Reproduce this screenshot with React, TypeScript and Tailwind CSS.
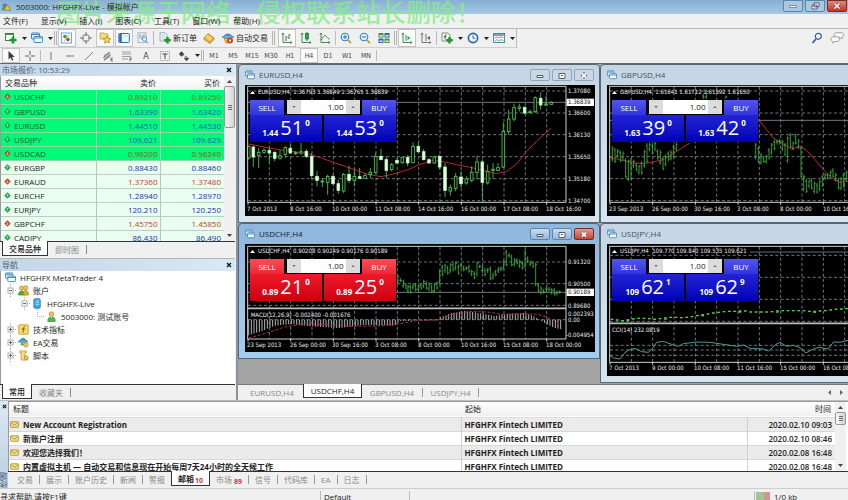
import type { ReactNode } from 'react'

type Bar = [x: number, high: number, low: number]
type Candle = [x: number, high: number, low: number, top: number, bottom: number, filled: number]

const ICONS: Record<string, ReactNode> = {
  app: (
    <>
      <path d="M1 9 5 2l4 3 2 5z" fill="#5ba544" stroke="#2f6f2b" strokeWidth=".6" />
      <path d="M4 10 7 4l3 2 1 4z" fill="#f2c14a" stroke="#94701c" strokeWidth=".6" />
      <circle cx="4" cy="4" r="2" fill="#3d86c6" />
    </>
  ),
  addChart: (
    <>
      <rect x=".5" y="1.5" width="8" height="7" fill="#fff" stroke="#3a8a3a" />
      <path d="M.5 2.5h8" stroke="#3a8a3a" />
      <path d="M8 4.5v7M4.5 8h7" stroke="#1c9a2c" strokeWidth="2.6" />
    </>
  ),
  profiles: (
    <>
      <rect x=".5" y="1" width="8" height="6" rx="1" fill="#d9ecfa" stroke="#3f83b8" />
      <path d="M1 2.5h7" stroke="#3f83b8" />
      <rect x="3" y="4.5" width="8.5" height="6" rx="1" fill="#f4faff" stroke="#3f83b8" />
      <path d="M3.500 6h8" stroke="#3f83b8" />
    </>
  ),
  market: (
    <>
      <rect x=".5" y="1" width="10" height="10" fill="#f6fbff" stroke="#7da7c8" />
      <circle cx="4" cy="4.500" r="1.800" fill="#2da043" />
      <circle cx="7" cy="7.500" r="1.800" fill="#c8402c" />
      <path d="m3 9 5-6" stroke="#5b8a5b" strokeWidth=".5" />
    </>
  ),
  target: (
    <>
      <circle cx="6" cy="6" r="3.500" fill="none" stroke="#777" />
      <path d="M6 0v4M6 8v4M0 6h4M8 6h4" stroke="#777" />
    </>
  ),
  navigator: (
    <>
      <path d="M1 1h4l1 1h3v5H1z" fill="#f6dc7a" stroke="#b8902c" strokeWidth=".7" />
      <path d="m8 4 1.200 2.500 2.600.2-2 1.800.6 2.600L8 9.700l-2.400 1.400.6-2.600-2-1.800 2.600-.2z" fill="#ffd84a" stroke="#a67a12" strokeWidth=".7" />
    </>
  ),
  terminal: (
    <>
      <rect x=".8" y="1.500" width="10.500" height="9" rx=".8" fill="#f4faff" stroke="#2d6da6" />
      <path d="M2.500 2v8" stroke="#2d6da6" strokeWidth="2.500" />
      <path d="M5 4h5" stroke="#9fc0dc" strokeWidth=".6" />
    </>
  ),
  tester: (
    <>
      <rect x="1" y=".8" width="8" height="9.500" fill="#f4f8fb" stroke="#8ba6ba" strokeWidth=".8" />
      <path d="M3 2v5M5 3v5M7 2v4" stroke="#4d87b5" strokeWidth=".8" />
      <circle cx="7.500" cy="7" r="2.200" fill="#d9ecfa" stroke="#5c86a5" strokeWidth=".8" />
      <path d="m9 9 2 2.500" stroke="#5c86a5" />
    </>
  ),
  order: (
    <>
      <path d="M1 .8h5l2 2V9H1z" fill="#fafcff" stroke="#7c95a8" strokeWidth=".8" />
      <path d="M2.500 3h3M2.500 5h4M2.500 7h3" stroke="#93a9b9" strokeWidth=".7" />
      <path d="M8.500 5v6.500M5.200 8.300h6.600" stroke="#1c9a2c" strokeWidth="2.500" />
    </>
  ),
  book: (
    <>
      <path d="m1 6 4-4.500 6 4.500-4 4.500z" fill="#f5c34e" stroke="#b27a18" strokeWidth=".8" />
      <path d="m1 6v1.500l6 4v-1M11 6v1.500l-4 4" fill="none" stroke="#b27a18" strokeWidth=".8" />
      <path d="m3.500 4 4.500 4" stroke="#fff0b8" />
    </>
  ),
  auto: (
    <>
      <path d="M2 5c1-4 7-4 8 0z" fill="#4d9fd0" stroke="#276b9b" strokeWidth=".7" />
      <path d="M0 5c3-2 9-2 12 0-3 1.500-9 1.500-12 0z" fill="#7cc1e4" stroke="#276b9b" strokeWidth=".6" />
      <path d="M2 6.500h5V11H4z" fill="#f2c14a" stroke="#a67a12" strokeWidth=".6" />
      <circle cx="8" cy="8.500" r="3" fill="#d93a2b" />
      <rect x="7" y="7.500" width="2" height="2" fill="#fff" />
    </>
  ),
  bars: <path d="M2 1v9.500h9M.8 2.500 2 1l1.200 1.500M9.500 9.300l1.500 1.200L9.500 11.700M5 4v5M5 8H4M5 5h1.500M8 2v5M8 3h1.500M8 6H6.800" fill="none" stroke="#2f7d4c" strokeWidth=".9" />,
  candles: (
    <>
      <path d="M2 1v9.500h9M.8 2.500 2 1l1.200 1.500M9.500 9.300l1.500 1.200L9.500 11.700M7 0v9" fill="none" stroke="#2f7d4c" strokeWidth=".9" />
      <rect x="5.500" y="1.500" width="3" height="5.500" fill="#1fae3c" stroke="#117027" strokeWidth=".7" />
    </>
  ),
  line: <path d="M2 1v9.500h9M.8 2.500 2 1l1.200 1.500M9.500 9.300l1.500 1.200L9.500 11.700M2.500 8c2-5 4-5 5-3.500S9.500 7 10.500 7" fill="none" stroke="#2f7d4c" strokeWidth=".9" />,
  zoomIn: (
    <>
      <path d="m8 8 3 3.200" stroke="#c89a2a" strokeWidth="1.800" />
      <circle cx="5" cy="5" r="3.800" fill="#d8efff" stroke="#2f7fc1" strokeWidth="1.100" />
      <path d="M5 3v4M3 5h4" stroke="#2f6fb1" />
    </>
  ),
  zoomOut: (
    <>
      <path d="m8 8 3 3.200" stroke="#c89a2a" strokeWidth="1.800" />
      <circle cx="5" cy="5" r="3.800" fill="#d8efff" stroke="#2f7fc1" strokeWidth="1.100" />
      <path d="M3 5h4" stroke="#2f6fb1" />
    </>
  ),
  tile: (
    <>
      <path d="M.5 1h5v4.500h-5zM6.500 6.500h5V11h-5z" fill="#3d9b3e" />
      <path d="M6.500 1h5v4.500h-5zM.5 6.500h5V11h-5z" fill="#2d6ca8" />
      <path d="M1.500 3h3v1.500h-3zM7.500 3h3v1.500h-3zM1.500 8.500h3V10h-3zM7.500 8.500h3V10h-3z" fill="#e7f3ea" />
    </>
  ),
  scroll: (
    <>
      <path d="M2 1v9.500h9M.8 2.500 2 1l1.200 1.500M9.500 9.300l1.500 1.200L9.500 11.700M5 3v6" fill="none" stroke="#2f7d4c" strokeWidth=".9" />
      <path d="M6.500 4v4L9.500 6z" fill="#1fae3c" />
    </>
  ),
  shift: (
    <>
      <path d="M2 1v9.500h9M.8 2.500 2 1l1.200 1.500M9.500 9.300l1.500 1.200L9.500 11.700M6 2v7" fill="none" stroke="#5c6a62" strokeWidth=".9" />
      <path d="M10 4v4L7 6z" fill="#7b5b4b" />
    </>
  ),
  indicators: (
    <>
      <path d="M1 1h6l2 2v6H1z" fill="#f7faf7" stroke="#5c7a62" strokeWidth=".8" />
      <path d="M5.500 2.500C4 2.500 4 4 4 7.500M2.800 4.700h2.700" fill="none" stroke="#333" strokeWidth=".8" />
      <path d="M8.500 5v6.500M5.200 8.300h6.600" stroke="#1c9a2c" strokeWidth="2.500" />
    </>
  ),
  clock: (
    <>
      <circle cx="6" cy="6" r="4.600" fill="#eef7ff" stroke="#2468ae" strokeWidth="1.700" />
      <path d="M6 3.200V6.300h2.300" fill="none" stroke="#555" strokeWidth=".9" />
    </>
  ),
  templates: (
    <>
      <rect x=".6" y="1.500" width="11" height="9" fill="#f4faff" stroke="#3f76a5" strokeWidth=".9" />
      <path d="M.6 3h11" stroke="#3f76a5" strokeWidth="1.300" />
      <path d="m2 6 2-1 2 1 2-1.500L10.500 6" fill="none" stroke="#b05b3b" strokeWidth=".7" />
      <path d="m2 9 2-1.500L6 9l2-1.500L10.500 9" fill="none" stroke="#3b9b4b" strokeWidth=".7" />
    </>
  ),
  cursor: <path d="M3.500 1v8.500l2-2 1.500 3.300 1.400-.7L7 7h2.800z" fill="#3d3d3d" />,
  cross: <path d="M6 1v4M6 7v4M1 6h4M7 6h4" stroke="#555" strokeWidth=".9" />,
  vline: <path d="M6 2v8" stroke="#777" />,
  hline: <path d="M2 6h8" stroke="#777" />,
  trend: <path d="m2 10 8-8" stroke="#666" strokeWidth=".8" />,
  channel: (
    <>
      <path d="m1 8 7-6M2 10.500l7-6M3 4v6M5 3v6M7 2v6" stroke="#555" strokeWidth=".7" />
      <path d="M11 8H9v3h2M9 9.500h1.500" fill="none" stroke="#555" strokeWidth=".7" />
    </>
  ),
  fibo: (
    <>
      <path d="M1 2h9M1 4h9M1 6.500h9M1 9h6" stroke="#888" strokeWidth=".8" />
      <path d="M11 8H9v3.500M9 9.500h1.500" fill="none" stroke="#555" strokeWidth=".7" />
    </>
  ),
  label: (
    <>
      <rect x="1.500" y="1.500" width="9" height="9" fill="none" stroke="#777" strokeWidth=".8" strokeDasharray="1.200 1" />
      <path d="M3.500 4h5M6 4v5" stroke="#444" />
    </>
  ),
  arrows: <path d="m3.500 1.500 2.500 2.500-2.500 2.500L1 4zM8.500 6v2H11L8.500 11 6 8h1.500M5 5l3 2" fill="#444" stroke="#444" strokeWidth=".4" />,
  search: (
    <>
      <path d="M5 7 1.500 11" stroke="#2f5f9c" strokeWidth="1.800" />
      <circle cx="7.300" cy="4.300" r="3" fill="#eef6ff" stroke="#2f5f9c" strokeWidth="1.200" />
    </>
  ),
  chat: (
    <>
      <path d="M5 1.500h5c2 0 2 4 0 4v1.500L8.500 5.500H5c-2 0-2-4 0-4z" fill="#f7f7f7" stroke="#999" strokeWidth=".8" />
      <path d="M2.500 5h4c2 0 2 4 0 4H4L2.500 10.500V9c-2 0-2-4 0-4z" fill="#f7f7f7" stroke="#999" strokeWidth=".8" />
    </>
  ),
  accounts: (
    <>
      <circle cx="4" cy="3.500" r="2.300" fill="#f4c64c" stroke="#9c7418" strokeWidth=".6" />
      <path d="M.5 11c0-6 7-6 7 0z" fill="#3fae49" stroke="#1f7a2a" strokeWidth=".6" />
      <circle cx="8.500" cy="3" r="2.300" fill="#f4c64c" stroke="#9c7418" strokeWidth=".6" />
      <path d="M5.500 11c0-7 6-7 6 0z" fill="#e0a928" stroke="#9c7418" strokeWidth=".6" />
    </>
  ),
  server: (
    <>
      <rect x="2" y=".8" width="7" height="10.500" rx="1.500" fill="#3fa3e0" stroke="#1b6fab" strokeWidth=".8" />
      <path d="M4 3h4M4 5h4M4 7h4" stroke="#d4eeff" strokeWidth=".8" />
    </>
  ),
  user: (
    <>
      <circle cx="6" cy="3.300" r="2.500" fill="#f4c64c" stroke="#9c7418" strokeWidth=".6" />
      <path d="M2 11.500c-1-7 9-7 8 0z" fill="#4fb83f" stroke="#1f7a2a" strokeWidth=".6" />
      <path d="m5 6 1 2 1-2" fill="#fff" />
    </>
  ),
  func: (
    <>
      <rect x=".8" y=".8" width="10.400" height="10.400" rx="1" fill="#f8d96a" stroke="#b8902c" strokeWidth=".8" />
      <path d="M8 2.500C6 2 6 5 5.500 9.500M4 5.500h4" fill="none" stroke="#6b4b10" strokeWidth=".9" />
    </>
  ),
  expert: (
    <>
      <path d="M2.500 4c1-3.500 5-3.500 6 0z" fill="#4d9fd0" stroke="#276b9b" strokeWidth=".7" />
      <path d="M0 5c3-2.500 8-2.500 11 0-3 1.500-8 1.500-11 0z" fill="#55b1de" stroke="#276b9b" strokeWidth=".6" />
      <circle cx="4.500" cy="8" r="1.500" fill="#5ba544" />
      <circle cx="8.500" cy="8.500" r="2.500" fill="#f4c64c" stroke="#9c7418" strokeWidth=".6" />
    </>
  ),
  script: (
    <>
      <path d="M2 1h7v2H7.500v6H10v2H3.500V3H2z" fill="#f8dd86" stroke="#b8902c" strokeWidth=".8" />
      <circle cx="9" cy="8.500" r="2.200" fill="#f4c64c" stroke="#9c7418" strokeWidth=".6" />
    </>
  ),
  mail: (
    <>
      <rect x=".8" y="2.300" width="10.400" height="7.500" rx=".8" fill="#f3dc7c" stroke="#9c7a22" strokeWidth=".9" />
      <path d="m1.500 3.500 4.500 3.500 4.500-3.500" fill="none" stroke="#9c7a22" strokeWidth=".9" />
    </>
  ),
}

function Icon({ name, className = 'size-3' }: { name: string; className?: string }) {
  return (
    <svg viewBox="0 0 12 12" className={`shrink-0 ${className}`} aria-hidden="true">
      {ICONS[name]}
    </svg>
  )
}

function Tool({ name, pressed = false, children }: { name?: string; pressed?: boolean; children?: ReactNode }) {
  return (
    <button
      aria-label={name}
      className={`flex w-[18px] shrink-0 items-center justify-center self-stretch text-[7px] text-[#444] ${
        pressed ? 'border border-[#c4c4c4] bg-[#fafafa]' : ''
      }`}
    >
      {name ? <Icon name={name} /> : children}
    </button>
  )
}

function DropArrow({ name }: { name: string }) {
  return (
    <button aria-label={`${name} list`} className="flex w-[6px] shrink-0 items-center justify-center">
      <svg viewBox="0 0 5 3" className="h-[3px] w-[5px]"><path d="M0 0h5L2.500 3z" fill="#222" /></svg>
    </button>
  )
}

function Divider({ wide = false }: { wide?: boolean }) {
  return wide
    ? <div className="mx-[2px] my-[2px] w-[3px] self-stretch border-x border-[#b4b4b4]" />
    : <div className="my-[2px] w-px self-stretch bg-[#bdbdbd]" />
}

const MENU = ['文件(F)', '显示(V)', '插入(I)', '图表(C)', '工具(T)', '窗口(W)', '帮助(H)']
const PERIODS = ['M1', 'M5', 'M15', 'M30', 'H1', 'H4', 'D1', 'W1', 'MN']

function Toolbars() {
  return (
    <>
      <div className="flex h-[19px] items-center gap-px border-t border-[#b9b9b9] pl-[2px]">
        <Tool name="addChart" /><DropArrow name="addChart" />
        <Tool name="profiles" /><DropArrow name="profiles" />
        <div className="my-[2px] w-[3px] self-stretch border-x border-[#b4b4b4]" />
        <Tool name="market" pressed />
        <Tool name="target" />
        <Tool name="navigator" pressed />
        <Tool name="terminal" pressed />
        <Tool name="tester" />
        <div className="my-[2px] w-[3px] self-stretch border-l border-[#b4b4b4]" />
        <button className="flex w-[42px] shrink-0 items-center gap-[2px] pl-[2px] whitespace-nowrap">
          <Icon name="order" />新订单
        </button>
        <Tool name="book" />
        <button className="flex w-[50px] shrink-0 items-center gap-[2px] pl-[3px] whitespace-nowrap">
          <Icon name="auto" />自动交易
        </button>
        <Divider wide />
        <Tool name="bars" pressed />
        <Tool name="candles" />
        <Tool name="line" />
        <Divider />
        <Tool name="zoomIn" />
        <Tool name="zoomOut" />
        <Tool name="tile" />
        <div className="my-[2px] w-[3px] self-stretch border-x border-[#b4b4b4]" />
        <Tool name="scroll" pressed />
        <Tool name="shift" />
        <Divider />
        <Tool name="indicators" /><DropArrow name="indicators" />
        <Tool name="clock" /><DropArrow name="clock" />
        <Tool name="templates" /><DropArrow name="templates" />
        <div className="w-px self-stretch bg-[#bdbdbd]" />
        <div className="ml-auto flex gap-[7px] pr-[4px]">
          <button aria-label="search"><Icon name="search" /></button>
          <button aria-label="chat"><Icon name="chat" className="size-[14px]" /></button>
        </div>
      </div>
      <div className="flex h-[16px]">
        <div className="flex w-[518px] items-center gap-px border-t border-[#cfcfcf] pl-[2px] font-['DejaVu_Sans_Condensed','DejaVu_Sans',sans-serif]">
          <Tool name="cursor" pressed />
          <Tool name="cross" />
          <Divider />
          <Tool name="vline" />
          <Tool name="hline" />
          <Tool name="trend" />
          <Tool name="channel" />
          <Tool name="fibo" />
          <Tool><span className="text-[9px]">A</span></Tool>
          <Tool name="label" />
          <Tool name="arrows" />
          <DropArrow name="arrows" />
          <div className="my-[2px] w-[3px] self-stretch border-x border-[#b4b4b4]" />
          {PERIODS.map((p) => <Tool key={p} pressed={p === 'H4'}>{p}</Tool>)}
          <Divider />
        </div>
      </div>
    </>
  )
}

const QUOTES: [symbol: string, bid: string, ask: string, up: boolean][] = [
  ['USDCHF', '0.89210', '0.89250', false],
  ['GBPUSD', '1.63390', '1.63420', true],
  ['EURUSD', '1.44510', '1.44530', true],
  ['USDJPY', '109.621', '109.629', true],
  ['USDCAD', '0.96200', '0.96240', false],
  ['EURGBP', '0.88430', '0.88460', true],
  ['EURAUD', '1.37360', '1.37480', false],
  ['EURCHF', '1.28940', '1.28970', true],
  ['EURJPY', '120.210', '120.250', true],
  ['GBPCHF', '1.45750', '1.45850', false],
  ['CADJPY', '86.430', '86.490', true],
]

function PanelTitle({ children }: { children: ReactNode }) {
  return (
    <div className="flex h-[12px] shrink-0 items-center justify-between bg-linear-to-r from-[#c3d6e8] to-[#d9e8f5] pr-[3px] pl-[2px] leading-[12px] text-[#4b6073]">
      {children}
      <button aria-label="close panel" className="size-[6px]">
        <svg viewBox="0 0 6 6"><path d="m1 1 4 4M5 1 1 5" stroke="#111" strokeWidth="1.300" /></svg>
      </button>
    </div>
  )
}

function ScrollBar({ thumb }: { thumb: string }) {
  return (
    <div className="flex w-[11px] shrink-0 flex-col items-center justify-between bg-[#f0f0f0] py-[4px]">
      <svg viewBox="0 0 5 3" className="h-[3px] w-[5px]"><path d="M0 3h5L2.500 0z" fill="#444" /></svg>
      <div className="mt-[3px] flex w-full flex-1">
        <div className={`flex w-full flex-col items-center justify-center gap-px rounded-[2px] border border-[#979797] bg-linear-to-r from-[#f7f7f7] to-[#d4d4d4] ${thumb}`}>
          <div className="h-px w-[4px] bg-[#666]" />
          <div className="h-px w-[4px] bg-[#666]" />
          <div className="h-px w-[4px] bg-[#666]" />
        </div>
      </div>
      <svg viewBox="0 0 5 3" className="h-[3px] w-[5px]"><path d="M0 0h5L2.500 3z" fill="#444" /></svg>
    </div>
  )
}

function BottomTabs({ active, other }: { active: string; other: string }) {
  return (
    <div className="flex h-[16px] shrink-0 border-t border-[#333] pl-[2px]">
      <button className="-mt-px h-[15px] border border-t-0 border-[#333] bg-white px-[6px] leading-[13px] font-medium">{active}</button>
      <button className="my-[3px] border-r border-[#888] px-[7px] leading-[8px] text-[#888]">{other}</button>
    </div>
  )
}

function MarketWatch() {
  return (
    <section className="flex h-[195px] shrink-0 flex-col border-b border-[#b5b5b5]">
      <PanelTitle>市场报价: 10:53:29</PanelTitle>
      <div className="flex h-[165px] shrink-0 overflow-hidden border-l border-[#999] bg-white">
        <div className="min-w-0 flex-1 overflow-hidden">
          <table className="w-full table-fixed border-collapse">
            <thead>
              <tr className="h-[14px] bg-linear-to-b from-white to-[#f2f2f2]">
                <th className="w-[95px] pl-[4px] text-left font-normal">交易品种</th>
                <th className="pr-[4px] text-right font-normal">卖价</th>
                <th className="pr-[4px] text-right font-normal">买价</th>
              </tr>
            </thead>
            <tbody>
              {QUOTES.map(([symbol, bid, ask, up], i) => {
                const strong = i < 5
                const tone = strong ? (up ? 'text-[#0065b5]' : 'text-[#8a6410]') : up ? 'text-[#1a2fa8]' : 'text-[#c03a2b]'
                return (
                  <tr key={symbol} className={`h-[14px] border-b leading-[13px] ${strong ? 'border-[#8fd8a8] bg-[#00fa78]' : 'border-[#bccfc2] bg-[#eafff0]'}`}>
                    <td className={`border-r border-[#a9d0b5] pl-[3px] ${strong ? 'text-[#055c33]' : 'text-[#222]'}`}>
                      <span className="flex items-center gap-[3px]">
                        <svg viewBox="0 0 7 7" className="size-[7px]">
                          <path d="M3.500.3 6.700 3.500 3.500 6.700.3 3.500z" fill={up ? '#16a34a' : '#c8402c'} />
                          <path d={up ? 'M3.500 2v3M2.300 3.500 3.500 2l1.200 1.500' : 'M3.500 2v3M2.300 3.500 3.500 5l1.200-1.500'} stroke="#e8f5d0" strokeWidth=".5" fill="none" />
                        </svg>
                        {symbol}
                      </span>
                    </td>
                    <td className={`border-r border-[#a9d0b5] pr-[2px] text-right ${tone}`}>{bid}</td>
                    <td className={`pr-[3px] text-right ${tone}`}>{ask}</td>
                  </tr>
                )
              })}
            </tbody>
          </table>
        </div>
        <ScrollBar thumb="h-[42px]" />
      </div>
      <BottomTabs active="交易品种" other="即时图" />
    </section>
  )
}

const TREE: [label: string, icon: string, indent: string, sign: string][] = [
  ['HFGHFX MetaTrader 4', 'profiles', 'pl-[4px]', ''],
  ['账户', 'accounts', 'pl-[6px]', '-'],
  ['HFGHFX-Live', 'server', 'pl-[20px]', '-'],
  ['5003000: 测试账号', 'user', 'pl-[34px]', 'leaf'],
  ['技术指标', 'func', 'pl-[6px]', '+'],
  ['EA交易', 'expert', 'pl-[6px]', '+'],
  ['脚本', 'script', 'pl-[6px]', '+'],
]

function Branch({ sign }: { sign: string }) {
  if (sign === 'leaf') {
    return <svg viewBox="0 0 10 13" className="h-[13px] w-[10px]"><path d="M2.500 0v6.500H10" fill="none" stroke="#aaa" strokeDasharray="1 1" /></svg>
  }
  return (
    <svg viewBox="0 0 10 13" className="h-[13px] w-[10px]">
      <path d="M3.500 0v13M6 6.500h4" stroke="#aaa" strokeDasharray="1 1" />
      <rect x="1" y="4" width="5" height="5" fill="#fff" stroke="#999" strokeWidth=".8" />
      <path d={sign === '+' ? 'M2 6.500h3M3.500 5v3' : 'M2 6.500h3'} stroke="#444" strokeWidth=".8" />
    </svg>
  )
}

function Navigator() {
  return (
    <section className="flex min-h-0 flex-1 flex-col">
      <PanelTitle>导航</PanelTitle>
      <ul className="min-h-0 flex-1 overflow-hidden border-l border-[#999] bg-white">
        {TREE.map(([label, icon, indent, sign]) => (
          <li key={label} className={`flex h-[13px] items-center ${indent}`}>
            {sign && <Branch sign={sign} />}
            <Icon name={icon} className={sign ? 'ml-px size-[11px]' : 'size-[11px]'} />
            <span className="ml-[4px] leading-[13px]">{label}</span>
          </li>
        ))}
      </ul>
      <BottomTabs active="常用" other="收藏夹" />
    </section>
  )
}

type Label = [x: number, y: number, text: string]

// plot geometry is in thirds of a pixel, text is in pixels
function Chart({ height, top, header, rows, bottom, dates, dateY, prices = [], price, children }: {
  height: number
  top: number
  header: string
  rows: number[]
  bottom: number
  dates: string[]
  dateY: number
  prices?: Label[]
  price?: [y: number, text: string]
  children: ReactNode
}) {
  const cols = Array.from({ length: 14 }, (_, i) => 94 + i * 64)
  return (
    <svg viewBox={`0 0 350 ${height}`} style={{ height }} className="block w-[350px] bg-black font-['DejaVu_Sans_Condensed','DejaVu_Sans',sans-serif] text-[6px]">
      <g transform={`scale(${1 / 3}) translate(-21 ${-top})`}>
        <g stroke="#a4b0bb" strokeWidth="2" strokeDasharray="9 7">
          {cols.map((x) => <path key={x} d={`M${x} 72V${bottom}`} />)}
          {rows.map((y) => <path key={y} d={`M30 ${y}H984`} />)}
        </g>
        {price && <path d={`M30 ${price[0]}H984`} stroke="#8a8f98" strokeWidth="2.500" />}
        {children}
        <path d={`M29 70H984V${bottom}H29z`} fill="none" stroke="#d0d0d0" strokeWidth="3" />
        {dates.map((d, i) => <path key={d} d={`M${30 + i * 128} ${bottom}v7`} stroke="#ddd" strokeWidth="3" />)}
        {price && <rect x="986" y={price[0] - 11} width="82" height="22" fill="#fff" />}
      </g>
      <path d="M5 9h5L7.500 6z" fill="#fff" />
      <text x="13" y="9" fill="#eee" xmlSpace="preserve">{header}</text>
      {dates.map((d, i) => <text key={d} x={Math.round(2 + i * 42.7)} y={dateY} fill="#eee">{d}</text>)}
      {prices.map(([x, y, t]) => <text key={t} x={x} y={y} fill="#eee">{t}</text>)}
      {price && <text x="323" y={Math.round((price[0] - top) / 3) + 2} fill="#111">{price[1]}</text>}
    </svg>
  )
}

function Bars({ data }: { data: Bar[] }) {
  return (
    <path
      d={data.map(([x, h, l], i) => `M${x} ${h}V${l}M${x - 4} ${i % 2 ? h + 7 : l - 7}h4M${x} ${i % 2 ? l - 5 : h + 6}h4`).join('')}
      stroke="#3fb83f"
      strokeWidth="2.500"
      fill="none"
    />
  )
}

const EURUSD: Candle[] = [
  [32, 248, 290, 250, 285, 0], [46, 248, 312, 252, 282, 1], [62, 255, 315, 268, 277, 0], [78, 256, 272, 262, 268, 0],
  [94, 255, 298, 262, 270, 1], [110, 265, 295, 268, 286, 1], [126, 262, 290, 278, 285, 0], [142, 250, 285, 254, 274, 0],
  [157, 242, 272, 256, 270, 1], [173, 264, 276, 269, 272, 0], [189, 240, 275, 266, 270, 0], [205, 258, 285, 265, 280, 1],
  [221, 270, 348, 280, 338, 1], [237, 325, 370, 340, 352, 1], [253, 345, 372, 354, 357, 0], [269, 335, 395, 340, 358, 0],
  [285, 335, 365, 340, 362, 1], [301, 350, 392, 362, 382, 1], [317, 330, 390, 334, 384, 0], [333, 308, 360, 334, 352, 1],
  [349, 320, 370, 340, 352, 0], [365, 315, 346, 341, 346, 1], [381, 330, 348, 338, 346, 0], [397, 315, 345, 328, 335, 0],
  [413, 270, 332, 280, 328, 0], [429, 258, 292, 280, 290, 1], [445, 280, 345, 290, 322, 1], [461, 300, 325, 305, 320, 0],
  [477, 285, 302, 292, 300, 1], [493, 282, 302, 283, 299, 0], [509, 276, 310, 283, 300, 1], [525, 238, 302, 250, 298, 0],
  [541, 238, 270, 250, 266, 1], [557, 258, 292, 266, 290, 1], [573, 285, 302, 290, 300, 1], [589, 278, 302, 282, 300, 0],
  [605, 275, 320, 280, 312, 1], [621, 300, 402, 312, 382, 1], [637, 365, 398, 374, 384, 0], [653, 330, 385, 340, 376, 0],
  [669, 325, 375, 342, 362, 1], [685, 340, 365, 348, 360, 0], [701, 310, 358, 328, 352, 0], [717, 278, 350, 297, 328, 0],
  [733, 290, 410, 297, 358, 1], [749, 305, 365, 325, 360, 0], [765, 300, 348, 319, 322, 0], [780, 300, 325, 314, 322, 0],
  [796, 178, 315, 205, 312, 0], [812, 140, 215, 168, 206, 0], [828, 122, 175, 134, 168, 0], [844, 122, 145, 132, 136, 0],
  [860, 130, 155, 133, 150, 1], [876, 140, 152, 146, 149, 0], [892, 100, 150, 104, 146, 0], [908, 88, 140, 106, 126, 1],
  [924, 98, 130, 123, 126, 0], [940, 115, 126, 118, 124, 0],
]

const GBPUSD: Bar[] = [
  [37, 250, 295], [45, 255, 300], [53, 258, 285], [61, 262, 298], [69, 265, 292], [77, 285, 345], [85, 290, 355],
  [93, 285, 350], [101, 290, 315], [109, 300, 325], [117, 305, 335], [125, 295, 335], [133, 260, 315], [141, 240, 300],
  [149, 238, 265], [157, 242, 275], [165, 235, 265], [173, 258, 290], [181, 262, 305], [189, 280, 322], [197, 275, 310],
  [205, 265, 295], [213, 262, 292], [221, 245, 285], [229, 238, 265], [310, 92, 108], [319, 80, 108], [378, 98, 106],
  [467, 240, 290], [475, 250, 300], [483, 270, 305], [491, 278, 300], [499, 275, 302], [507, 255, 290], [515, 240, 275],
  [523, 230, 262], [531, 230, 245], [539, 228, 245], [547, 230, 265], [555, 240, 280], [563, 220, 300], [571, 210, 255],
  [579, 235, 262], [587, 212, 245], [595, 228, 258], [603, 250, 345], [611, 335, 385], [619, 348, 390], [627, 350, 375],
  [635, 345, 380], [643, 355, 392], [651, 360, 392], [659, 350, 385], [667, 335, 372], [675, 330, 350], [683, 330, 350],
  [691, 322, 345], [699, 315, 345], [707, 330, 355], [715, 345, 380], [723, 342, 382], [731, 330, 375], [739, 322, 355],
]

const USDCHF: Bar[] = [
  [480, 155, 185], [488, 165, 178], [496, 170, 195], [504, 180, 200], [510, 185, 210], [517, 185, 212], [525, 182, 200],
  [533, 180, 205], [541, 185, 205], [549, 180, 200], [557, 170, 195], [565, 175, 200], [573, 178, 205], [581, 185, 210],
  [589, 180, 210], [597, 175, 200], [605, 140, 185], [613, 125, 160], [621, 122, 150], [629, 128, 155], [637, 120, 150],
  [645, 118, 145], [653, 115, 142], [661, 125, 155], [669, 120, 135], [677, 128, 145], [685, 130, 142], [693, 125, 150],
  [701, 140, 160], [709, 145, 168], [717, 115, 160], [725, 125, 135], [733, 128, 150], [741, 135, 160], [749, 135, 150],
  [757, 130, 172], [765, 150, 170], [773, 140, 160], [781, 132, 150], [789, 130, 145], [797, 110, 140], [805, 80, 130],
  [813, 90, 105], [821, 95, 130], [829, 105, 130], [837, 105, 125], [845, 110, 135], [853, 115, 140], [861, 80, 135],
  [869, 100, 120], [877, 112, 130], [885, 115, 135], [893, 118, 190], [901, 180, 208], [909, 190, 215], [917, 198, 212],
  [925, 190, 205], [933, 192, 205], [941, 195, 215], [949, 195, 218], [957, 202, 218], [965, 202, 212],
]

// [x, y] knots of the MACD histogram, the bars between them are interpolated
const MACD = [[32, 337], [70, 325], [110, 308], [160, 303], [220, 310], [300, 315], [380, 306], [470, 308], [484, 294], [600, 292], [606, 284], [640, 270], [680, 264], [730, 271], [770, 279], [810, 272], [860, 270], [890, 281], [905, 290], [925, 303], [950, 315], [968, 318]]

function macdY(x: number) {
  const i = Math.max(1, MACD.findIndex(([kx]) => kx >= x))
  const [x0, y0] = MACD[i - 1]
  const [x1, y1] = MACD[i]
  return y0 + ((y1 - y0) * (x - x0)) / (x1 - x0)
}

const JPY_Y = [289, 291, 293, 290, 288, 286, 286, 287, 289, 287, 285, 283, 283, 284, 283, 281, 278, 275, 273, 270, 268, 266, 265, 265, 264, 264, 267, 267, 267, 267, 266, 264, 263, 263, 263, 263, 263, 265, 265, 264, 263, 261, 259, 258, 257]

type Quote = { base: string; big: string; tip: string }

function TradePanel({ sell, buy, red = false }: { sell: Quote; buy: Quote; red?: boolean }) {
  const head = red ? 'bg-linear-to-b from-[#ff4a55] to-[#ee2635]' : 'bg-linear-to-b from-[#5254ee] to-[#3234dc]'
  const body = red ? 'bg-linear-to-b from-[#f01828] to-[#cc0010]' : 'bg-linear-to-b from-[#2222d8] to-[#0000b4]'
  return (
    <div className="absolute top-[15px] left-[5px] w-[146px] bg-black text-white">
      <div className="flex h-[15px] items-start justify-between">
        <button className={`h-[15px] w-[34px] leading-[15px] ${head}`}>SELL</button>
        <div className="flex h-[14px] w-[73px] bg-[#dcdcdc] text-[#888]">
          <button aria-label="less" className="flex w-[14px] items-center justify-center">
            <svg viewBox="0 0 5 3" className="h-[2px] w-[4px]"><path d="M0 0h5L2.500 3z" fill="#667" /></svg>
          </button>
          <input aria-label="volume" defaultValue="1.00" className="w-0 flex-1 bg-white pr-[2px] text-right text-[#222]" />
          <button aria-label="more" className="flex w-[14px] items-center justify-center">
            <svg viewBox="0 0 5 3" className="h-[2px] w-[4px]"><path d="M0 3h5L2.500 0z" fill="#667" /></svg>
          </button>
        </div>
        <button className={`h-[15px] w-[34px] leading-[15px] ${head}`}>BUY</button>
      </div>
      <div className="flex justify-between">
        {[sell, buy].map((q, i) => (
          <button key={i} className={`flex h-[27px] w-[72px] justify-center gap-[2px] ${body}`}>
            <span className="pt-[12px] leading-[12px] font-bold">{q.base}</span>
            <span className="text-[20px] leading-[26px]">{q.big}</span>
            <span className="pt-[2px] leading-[12px] font-bold">{q.tip}</span>
          </button>
        ))}
      </div>
    </div>
  )
}

function ChartWindow({ title, active = false, children }: { title: string; active?: boolean; children: ReactNode }) {
  return (
    <section
      className={`w-[362px] shrink-0 rounded-t-[4px] border border-[#5a6672] pr-[4px] pb-[6px] pl-[6px] ${
        active ? 'bg-linear-to-b from-[#8fb7de] to-[#a3cdf0]' : 'bg-linear-to-b from-[#c6d5e3] to-[#d6e4f0]'
      }`}
    >
      <div className="flex h-[20px] items-center gap-[4px]">
        <Icon name="profiles" className="size-[10px]" />
        <h2 className={active ? 'text-[#15202c]' : 'text-[#44505c]'}>{title}</h2>
        <div className="ml-auto flex gap-[2px] pr-px">
          {['M3 5.500h6v2H3z', 'M3 3.500h6v5H3zM5 5.500h2', 'm4 3.500 4 4M8 3.500l-4 4'].map((d, i) => (
            <button
              key={d}
              aria-label={['minimize', 'maximize', 'close'][i]}
              className={`flex h-[12px] w-[20px] items-center justify-center rounded-[2px] border ${
                active
                  ? i === 2 ? 'border-[#7c2a22] bg-linear-to-b from-[#e09a8e] to-[#c8402c]' : 'border-[#5f83a8] bg-linear-to-b from-[#c8def2] to-[#94b9dc]'
                  : 'border-[#93a5b6] bg-[#c9d8e6]'
              }`}
            >
              <svg viewBox="0 0 12 11" className="h-[11px] w-[12px]">
                {i === 2 && <path d={d} stroke="#5a5a66" strokeWidth="3.500" />}
                <path d={d} fill={i === 2 ? 'none' : '#fff'} stroke={i === 2 ? '#fff' : '#5a5a66'} strokeWidth={i === 2 ? 1.8 : 1} />
              </svg>
            </button>
          ))}
        </div>
      </div>
      <div className="relative">{children}</div>
    </section>
  )
}

function Desktop() {
  return (
    <div className="flex min-h-0 flex-1 overflow-hidden bg-[#a3a3a3]">
      <div className="flex w-[362px] shrink-0 flex-col">
        <ChartWindow title="EURUSD,H4">
          <Chart
            height={131} top={66} bottom={418} dateY={126}
            header="EURUSD,H4  1.36793 1.36849 1.36765 1.36839"
            rows={[84, 150, 215, 281, 347, 413]}
            dates={['7 Oct 2013', '8 Oct 16:00', '10 Oct 00:00', '11 Oct 08:00', '14 Oct 16:00', '16 Oct 00:00', '17 Oct 08:00', '18 Oct 16:00']}
            prices={[[323, 8, '1.37080'], [323, 30, '1.36600'], [323, 52, '1.36130'], [323, 74, '1.35650'], [323, 96, '1.35180'], [323, 118, '1.34700']]}
            price={[118, '1.36839']}
          >
            <path d="M32 243 110 258 160 265 210 272 250 285 300 303 350 320 390 334 430 341 470 332 510 320 546 304 586 292 616 296 656 305 706 315 776 332 806 325 836 303 866 265 896 235 938 196" fill="none" stroke="#b82828" strokeWidth="3" />
            {EURUSD.map(([x, h, l, t, b, filled]) => (
              <g key={x} stroke="#4fd04f" strokeWidth="2.500">
                <path d={`M${x} ${h}V${l}`} />
                <rect x={x - 4} y={t} width="8" height={b - t} fill={filled ? '#eaffea' : '#000'} stroke={filled ? '#b8f5b8' : '#4fd04f'} />
              </g>
            ))}
          </Chart>
          <TradePanel sell={{ base: '1.44', big: '51', tip: '0' }} buy={{ base: '1.44', big: '53', tip: '0' }} />
        </ChartWindow>
        <ChartWindow title="USDCHF,H4" active>
          <Chart
            height={108} top={63} bottom={348} dateY={103}
            header="USDCHF,H4  0.90208 0.90249 0.90176 0.90189"
            rows={[117, 182, 247, 290]}
            dates={['23 Sep 2013', '26 Sep 00:00', '30 Sep 16:00', '3 Oct 08:00', '8 Oct 00:00', '10 Oct 16:00', '15 Oct 08:00', '18 Oct 00:00']}
            prices={[[323, 20, '0.91320'], [323, 42, '0.90500'], [323, 64, '0.89680'], [323, 72, '0.002393'], [323, 78, '0.00'], [321, 93, '-0.004954']]}
            price={[208, '0.90189']}
          >
            <Bars data={USDCHF} />
            <path d={Array.from({ length: 118 }, (_, i) => 32 + i * 8).map((x) => `M${x} 290V${Math.round(macdY(x))}`).join('')} stroke="#b5b5b5" strokeWidth="3" />
            <path d="M32 345 80 332 140 312 200 303 260 305 340 310 420 309 500 300 546 291 600 291 640 275 700 265 760 268 800 276 850 272 900 274 930 284 968 300" fill="none" stroke="#a83232" strokeWidth="3" strokeDasharray="9 5" />
            <path d="M29 256H984" stroke="#bbb" strokeWidth="5" />
            <text x="38" y="282" fontSize="18" fill="#eee">MACD(12,26,9) -0.002400 -0.001676</text>
          </Chart>
          <TradePanel red sell={{ base: '0.89', big: '21', tip: '0' }} buy={{ base: '0.89', big: '25', tip: '0' }} />
        </ChartWindow>
      </div>
      <div className="flex w-[362px] flex-col">
        <ChartWindow title="GBPUSD,H4">
          <Chart
            height={131} top={66} bottom={418} dateY={126}
            header="GBPUSD,H4  1.61641 1.61712 1.61592 1.61650"
            rows={[84, 150, 215, 281, 347, 413]}
            dates={['23 Sep 2013', '26 Sep 00:00', '30 Sep 16:00', '3 Oct 08:00', '8 Oct 00:00', '10 Oct 16:00']}
          >
            <path d="M30 172H984" stroke="#8a8f98" strokeWidth="2.500" />
            <path d="M28 283 60 290 100 300 140 301 190 290 230 265 270 240M475 168 500 200 520 225 545 240 575 258 600 250 620 262 645 290 670 320 700 350 720 358 744 355" fill="none" stroke="#b82828" strokeWidth="3" />
            <Bars data={GBPUSD} />
          </Chart>
          <TradePanel sell={{ base: '1.63', big: '39', tip: '0' }} buy={{ base: '1.63', big: '42', tip: '0' }} />
        </ChartWindow>
        <ChartWindow title="USDJPY,H4">
          <Chart
            height={132} top={63} bottom={418} dateY={126}
            header="USDJPY,H4  109.770 109.840 109.535 109.621"
            rows={[97, 163, 229, 295, 367, 381, 397]}
            dates={['7 Oct 2013', '9 Oct 00:00', '10 Oct 08:00', '11 Oct 16:00', '15 Oct 00:00', '16 Oct 08:00']}
          >
            <path d="M450 87H984" stroke="#6f7f92" strokeWidth="2.500" />
            <g stroke="#4fd04f" strokeWidth="2">
              {JPY_Y.map((y, i) => (
                <rect key={i} x={33 + i * 16} y={y - 1} width="6" height={i % 7 === 3 ? 5 : 2} fill={i === 37 || i === 6 ? '#dfffdf' : '#4fd04f'} />
              ))}
            </g>
            <path d="M29 301H984" stroke="#bbb" strokeWidth="5" />
            <path d="M28 396 40 405 60 408 72 392 84 382 105 376 125 386 145 388 158 376 170 358 190 355 220 366 236 370 250 362 290 357 330 358 370 364 410 370 430 366 450 376 490 378 505 384 515 376 528 364 540 358 560 370 580 367 600 374 618 390 636 380 655 373 685 378 700 357 720 358 744 352" fill="none" stroke="#4f9a94" strokeWidth="3" />
            <text x="36" y="328" fontSize="18" fill="#eee">CCI(14) 232.0819</text>
          </Chart>
          <TradePanel sell={{ base: '109', big: '62', tip: '1' }} buy={{ base: '109', big: '62', tip: '9' }} />
        </ChartWindow>
      </div>
    </div>
  )
}

function ChartTabs() {
  return (
    <nav className="flex h-[16px] shrink-0 border-t border-[#777] bg-[#f0f0f0] pl-[5px] text-[#888]">
      <button className="my-[3px] w-[60px] pl-[7px] text-left leading-[9px]">EURUSD,H4</button>
      <button className="-mt-px h-[14px] w-[59px] border border-t-0 border-[#333] bg-white leading-[14px] text-[#222]">USDCHF,H4</button>
      <button className="my-[3px] w-[61px] border-r border-[#999] leading-[9px]">GBPUSD,H4</button>
      <button className="my-[3px] w-[56px] border-r border-[#999] leading-[9px]">USDJPY,H4</button>
      <div className="ml-auto flex items-center gap-[9px] pr-[5px]">
        <button aria-label="previous chart"><svg viewBox="0 0 3 5" className="h-[5px] w-[3px]"><path d="M3 0v5L0 2.500z" fill="#666" /></svg></button>
        <button aria-label="next chart"><svg viewBox="0 0 3 5" className="h-[5px] w-[3px]"><path d="M0 0v5l3-2.500z" fill="#666" /></svg></button>
      </div>
    </nav>
  )
}

const MAILS = [
  ['New Account Registration', '2020.02.10 09:03'],
  ['新账户注册', '2020.02.10 08:46'],
  ['欢迎您选择我们！', '2020.02.08 16:48'],
  ['内置虚拟主机 — 自动交易和信息现在开始每周7天24小时的全天候工作', '2020.02.08 16:48'],
]

const TERMINAL_TABS: [label: string, count?: string][] = [
  ['交易'], ['展示'], ['账户历史'], ['新闻'], ['警报'], ['邮箱', '10'], ['市场', '89'], ['信号'], ['代码库'], ['EA'], ['日志'],
]

function Terminal() {
  return (
    <section className="flex h-[88px] shrink-0 border-t border-[#bbb] bg-[#f0f0f0]">
      <div className="flex w-[8px] shrink-0 flex-col items-center justify-between overflow-hidden bg-linear-to-b from-[#dce8f3] to-[#b9cfe4] pt-[3px] text-[#4b6073]">
        <button aria-label="close terminal" className="size-[5px]">
          <svg viewBox="0 0 6 6"><path d="m1 1 4 4M5 1 1 5" stroke="#111" strokeWidth="1.300" /></svg>
        </button>
        <span className="rotate-180 leading-[8px] [writing-mode:vertical-rl]">终端</span>
      </div>
      <div className="flex min-w-0 flex-1 flex-col">
        <div className="flex h-[70px] shrink-0 overflow-hidden border-t border-l border-[#999] bg-white pr-[2px]">
          <div className="min-w-0 flex-1 overflow-hidden">
            <table className="w-full table-fixed border-collapse">
              <thead>
                <tr className="h-[15px] border-b border-[#ddd] bg-linear-to-b from-white to-[#f0f0f0]">
                  <th className="pl-[4px] text-left font-normal">标题</th>
                  <th className="w-[286px] pl-[4px] text-left font-normal">起始</th>
                  <th className="w-[88px] pr-[4px] text-right font-normal">时间</th>
                </tr>
              </thead>
              <tbody className="font-bold">
                {MAILS.map(([title, time]) => (
                  <tr key={title} className="h-[14px] border-b border-[#d8d8d8] leading-[13px] odd:bg-[#ebebeb]">
                    <td className="border-r border-[#d0d0d0] pl-px">
                      <span className="flex items-center gap-[4px] whitespace-nowrap">
                        <Icon name="mail" className="size-[9px]" />{title}
                      </span>
                    </td>
                    <td className="border-r border-[#d0d0d0] pl-[3px]">HFGHFX Fintech LIMITED</td>
                    <td className="pr-[3px] text-right font-semibold whitespace-nowrap">{time}</td>
                  </tr>
                ))}
              </tbody>
            </table>
          </div>
          <ScrollBar thumb="h-[13px]" />
        </div>
        <nav className="flex h-[16px] shrink-0 border-t border-[#333] pl-[3px] leading-[9px] text-[#888]">
          {TERMINAL_TABS.map(([label, count], i) => (
            <button
              key={label}
              className={
                i === 5
                  ? '-mt-px flex h-[15px] items-center gap-px border border-t-0 border-[#333] bg-white px-[6px] font-bold text-[#222]'
                  : `my-[3px] flex items-center gap-[2px] px-[6px] ${i === 4 ? '' : 'border-r border-[#999]'}`
              }
            >
              {label}
              {count && <span className="pt-[4px] text-[7px] font-bold text-[#d3304a]">{count}</span>}
            </button>
          ))}
        </nav>
      </div>
    </section>
  )
}

export default function App() {
  return (
    <div className="relative flex h-screen min-h-0 flex-col overflow-hidden bg-[#f0f0f0] font-['Open_Sans','Noto_Sans_CJK_SC',sans-serif] text-[8px] leading-[12px] text-[#222]">
      <header className="flex h-[14px] shrink-0 items-center gap-[5px] bg-linear-to-b from-[#89afd0] to-[#a5c9e6] pl-px">
        <Icon name="app" className="size-[10px]" />
        <h1 className="relative z-10">5003000: HFGHFX-Live - 模拟帐户</h1>
        <div className="ml-auto flex gap-[2px] self-start pr-px">
          <button aria-label="minimize" className="flex h-[12px] w-[20px] items-center justify-center rounded-b-[2px] border border-[#5f83a8] bg-[#a9c8e4]">
            <svg viewBox="0 0 8 3" className="h-[3px] w-[8px]"><path d="M.5.5h7v2h-7z" fill="#fff" stroke="#667" strokeWidth=".7" /></svg>
          </button>
          <button aria-label="restore" className="flex h-[12px] w-[20px] items-center justify-center rounded-b-[2px] border border-[#5f83a8] bg-[#a9c8e4]">
            <svg viewBox="0 0 9 8" className="h-[8px] w-[9px]"><path d="M3 .8h5v4H3zM1 3h5v4H1z" fill="#e8eef4" stroke="#556" strokeWidth=".9" /></svg>
          </button>
          <button aria-label="close" className="flex h-[12px] w-[20px] items-center justify-center rounded-b-[2px] border border-[#7c2a22] bg-linear-to-b from-[#e0867c] to-[#c8301f]">
            <svg viewBox="0 0 8 8" className="size-[8px]"><path d="m1.500 1.500 5 5M6.500 1.500l-5 5" stroke="#6b3a3a" strokeWidth="3" /><path d="m1.500 1.500 5 5M6.500 1.500l-5 5" stroke="#fff" strokeWidth="1.700" /></svg>
          </button>
        </div>
      </header>
      <nav className="relative z-10 flex h-[14px] shrink-0 items-center gap-[13px] pl-[3px]">
        {MENU.map((m) => <button key={m} className="whitespace-nowrap">{m}</button>)}
      </nav>
      <p className="pointer-events-none absolute top-0 left-[56px] text-[25px] leading-[25px] font-medium whitespace-nowrap text-[#86ec86]/80">图片来源于网络，侵权联系站长删除！</p>
      <Toolbars />
      <main className="flex min-h-0 flex-1 border-t border-[#5f6b76]">
        <aside className="flex w-[238px] shrink-0 flex-col border-r-2 border-[#8a949d] pr-px">
          <MarketWatch />
          <Navigator />
        </aside>
        <div className="flex min-w-0 flex-1 flex-col">
          <Desktop />
          <ChartTabs />
        </div>
      </main>
      <Terminal />
      <footer className="flex h-[12px] shrink-0 items-start overflow-hidden border-t border-[#ccc] pt-[2px]">
        <span className="w-[320px] shrink-0">寻求帮助,请按F1键</span>
        <span className="w-[90px] shrink-0 border-x border-[#bbb] pl-[3px]">Default</span>
        <span className="ml-auto flex w-[94px] shrink-0 gap-[3px] border-l border-[#bbb] pl-px">
          <svg viewBox="0 0 15 10" className="h-[10px] w-[15px]"><path d="M1 1v9M3 1v9M5 1v9M7 1v9" stroke="#4f9a3a" /><path d="M9 1v9M11 1v9M13 1v9" stroke="#b03a2b" /></svg>
          1/0 kb
        </span>
      </footer>
    </div>
  )
}
